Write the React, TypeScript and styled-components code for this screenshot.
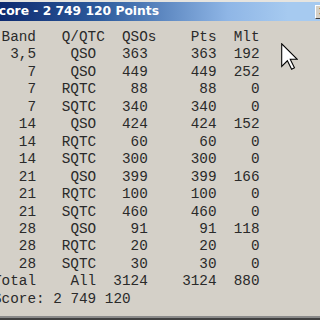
import React from "react"
import styled, { createGlobalStyle } from "styled-components"

type ScoreRow = {
    band: string,
    kind: string,
    qsos: number,
    pts: number,
    mlt: number
}

const rows: ScoreRow[] = [
    { band: "3,5", kind: "QSO", qsos: 363, pts: 363, mlt: 192 },
    { band: "7", kind: "QSO", qsos: 449, pts: 449, mlt: 252 },
    { band: "7", kind: "RQTC", qsos: 88, pts: 88, mlt: 0 },
    { band: "7", kind: "SQTC", qsos: 340, pts: 340, mlt: 0 },
    { band: "14", kind: "QSO", qsos: 424, pts: 424, mlt: 152 },
    { band: "14", kind: "RQTC", qsos: 60, pts: 60, mlt: 0 },
    { band: "14", kind: "SQTC", qsos: 300, pts: 300, mlt: 0 },
    { band: "21", kind: "QSO", qsos: 399, pts: 399, mlt: 166 },
    { band: "21", kind: "RQTC", qsos: 100, pts: 100, mlt: 0 },
    { band: "21", kind: "SQTC", qsos: 460, pts: 460, mlt: 0 },
    { band: "28", kind: "QSO", qsos: 91, pts: 91, mlt: 118 },
    { band: "28", kind: "RQTC", qsos: 20, pts: 20, mlt: 0 },
    { band: "28", kind: "SQTC", qsos: 30, pts: 30, mlt: 0 },
]

const GlobalStyle = createGlobalStyle`
    html, body {
        margin: 0;
        padding: 0;
        background: #d4d0c8;
    }
`

function Cursor() {
    return (
        <CursorSvg width="17" height="27" viewBox="-0.5 -0.5 12 19">
            <path
                d="M0 0 L0 16 L4 12 L7 18 L9 17 L6 11 L11 11 Z"
                fill="#fff"
                stroke="#000"
                strokeWidth="0.75"
            />
        </CursorSvg>
    )
}

export default function App() {
    return (
        <Desktop>
            <GlobalStyle />
            <Window>
                <TitleBar>
                    <Title>Score - 2 749 120 Points</Title>
                    <CloseButton>×</CloseButton>
                </TitleBar>
                <Body>
                    <Row>
                        <Cell>Band</Cell>
                        <Cell>Q/QTC</Cell>
                        <Cell>QSOs</Cell>
                        <Cell>Pts</Cell>
                        <Cell>Mlt</Cell>
                    </Row>
                    {rows.map((r, i) => (
                        <Row key={i}>
                            <Cell>{r.band}</Cell>
                            <Cell $pad={1}>{r.kind}</Cell>
                            <Cell $pad={1}>{r.qsos}</Cell>
                            <Cell>{r.pts}</Cell>
                            <Cell>{r.mlt}</Cell>
                        </Row>
                    ))}
                    <Row>
                        <Cell $left>Total</Cell>
                        <Cell $pad={1}>All</Cell>
                        <Cell $pad={1}>3124</Cell>
                        <Cell>3124</Cell>
                        <Cell>880</Cell>
                    </Row>
                    <Line>Score: 2 749 120</Line>
                </Body>
            </Window>
            <Cursor />
        </Desktop>
    )
}

const Desktop = styled.div`
    position: relative;
    width: 320px;
    height: 320px;
    overflow: hidden;
    background: #d4d0c8;
`

const Window = styled.div`
    width: 360px;
    height: 320px;
    margin-left: -16px;
    box-sizing: border-box;
    background: #d4d0c8;
    border-top: 2px solid #e6e4df;
    border-left: 4px solid #d4d0c8;
    border-bottom: 2px solid #404040;
    box-shadow: inset 0 -2px 0 #8a8a8a;
    display: flex;
    flex-direction: column;
`

const TitleBar = styled.div`
    height: 19px;
    flex: none;
    display: flex;
    align-items: center;
    padding: 0 0 0 2px;
    background: linear-gradient(to right, #0a246a 0px, #2c5a9c 110px, #8fb6e6 240px, #a6caf0 300px, #a6caf0);
`

const Title = styled.span`
    flex: 1;
    color: #fff;
    font-family: "DejaVu Sans", Tahoma, sans-serif;
    font-weight: bold;
    font-size: 12.3px;
    line-height: 19px;
    white-space: nowrap;
`

const CloseButton = styled.span`
    position: absolute;
    left: 315px;
    top: 5px;
    width: 16px;
    height: 14px;
    box-sizing: border-box;
    background: #d4d0c8;
    border-top: 1px solid #fff;
    border-left: 1px solid #fff;
    border-bottom: 1px solid #404040;
    border-right: 1px solid #404040;
    font-family: "DejaVu Sans", sans-serif;
    font-weight: bold;
    font-size: 12px;
    line-height: 11px;
    text-align: center;
    color: #000;
`

const Body = styled.div`
    flex: 1;
    padding: 8px 0 0 5px;
    font-family: "Liberation Mono", "Courier New", monospace;
    font-size: 14.33px;
    line-height: 17.45px;
    color: #2a2a2a;
`

const Row = styled.div`
    display: grid;
    grid-template-columns: 5ch 8ch 6ch 7ch 5ch;
    white-space: pre;
`

const Cell = styled.span<{ $pad?: number, $left?: boolean }>`
    text-align: ${({ $left }) => ($left ? "left" : "right")};
    padding-right: ${({ $pad }) => ($pad ? `${$pad}ch` : "0")};
`

const Line = styled.div`
    white-space: pre;
`

const CursorSvg = styled.svg`
    position: absolute;
    left: 281px;
    top: 43px;
    width: 17px;
    height: 27px;
`
